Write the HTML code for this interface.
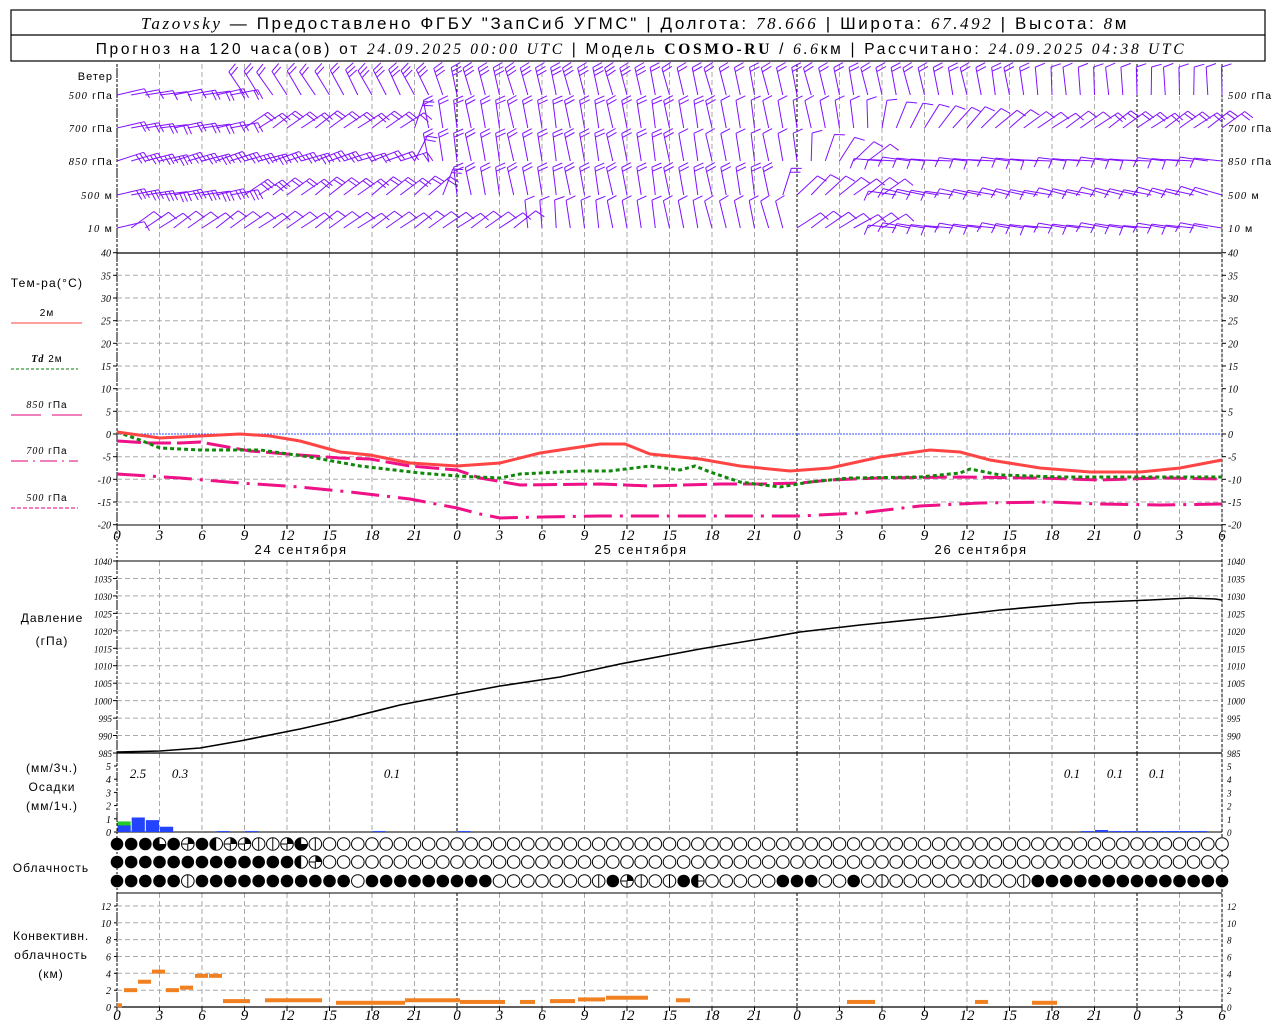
<!DOCTYPE html>
<html><head><meta charset="utf-8">
<style>
html,body{margin:0;padding:0;background:#fff;width:1280px;height:1024px;overflow:hidden}
svg{display:block;font-family:"Liberation Sans",sans-serif}
</style></head>
<body>
<svg id="s" width="1280" height="1024" viewBox="0 0 1280 1024" xmlns="http://www.w3.org/2000/svg">
<rect x="11" y="10" width="1254" height="51" fill="#fff" stroke="#000" stroke-width="1.2"/>
<line x1="11" y1="35" x2="1265" y2="35" stroke="#000" stroke-width="1.2"/>
<text x="635" y="29" text-anchor="middle" font-size="17" letter-spacing="2.6"><tspan font-family="Liberation Serif" font-style="italic">Tazovsky</tspan> — Предоставлено ФГБУ "ЗапСиб УГМС" | Долгота: <tspan font-family="Liberation Serif" font-style="italic">78.666</tspan> | Широта: <tspan font-family="Liberation Serif" font-style="italic">67.492</tspan> | Высота: <tspan font-family="Liberation Serif" font-style="italic">8</tspan>м</text>
<text x="641" y="54" text-anchor="middle" font-size="15.5" letter-spacing="2.7">Прогноз на 120 часа(ов) от <tspan font-family="Liberation Serif" font-style="italic">24.09.2025 00:00 UTC</tspan>  | Модель <tspan font-family="Liberation Serif" font-weight="bold">COSMO-RU</tspan> / <tspan font-family="Liberation Serif" font-style="italic">6.6</tspan>км | Рассчитано: <tspan font-family="Liberation Serif" font-style="italic">24.09.2025 04:38 UTC</tspan></text>
<g id="g"></g>
</svg>
<script>
var g=document.getElementById('g'),out='';
var X0=117,X1=1222,PH=340/24;
function X(h){return X0+h*PH}
function L(x1,y1,x2,y2,c,w,d){out+='<line x1="'+x1.toFixed(1)+'" y1="'+y1.toFixed(1)+'" x2="'+x2.toFixed(1)+'" y2="'+y2.toFixed(1)+'" stroke="'+c+'" stroke-width="'+(w||1)+'"'+(d?' stroke-dasharray="'+d+'"':'')+'/>';}
function T(x,y,s,fs,anc,it,ls){out+='<text x="'+x+'" y="'+y+'" font-size="'+fs+'"'+(anc?' text-anchor="'+anc+'"':'')+(it?' font-style="italic" font-family="Liberation Serif"':'')+(ls?' letter-spacing="'+ls+'"':'')+'>'+s+'</text>';}
function P(pts,c,w,d){var s='';for(var i=0;i<pts.length;i+=2)s+=(i?'L':'M')+pts[i]+' '+pts[i+1];out+='<path d="'+s+'" fill="none" stroke="'+c+'" stroke-width="'+w+'"'+(d?' stroke-dasharray="'+d+'"':'')+'/>';}
function vgrid(y1,y2){for(var h=0;h<=78;h+=3){var x=X(h);if(h%24==0){L(x,y1,x,y2,'#000',1,'3,2');}else L(x,y1,x,y2,'#aaa',1,'5,3');}}
function hgrid(y,){L(X0,y,X1,y,'#aaa',1,'5,3');}
vgrid(64,253);vgrid(253,525);vgrid(561,753);vgrid(753,832);vgrid(893,1007);
L(X1,64,X1,1007,'#000',1,'3,2');
for(var t=-20;t<=40;t+=5){var y=434-t*4.533;if(t>-20&&t<40&&t!=0)hgrid(y);L(X0-4,y,X0,y,'#000');L(X1,y,X1+4,y,'#000');T(X0-6,y+4,t,10,'end',1);T(X1+6,y+4,t,10,null,1);}
L(X0,434,X1,434,'#3050ff',1,'2,1');
L(X0,253,X1,253,'#000',1.2);L(X0,525,X1,525,'#000',1);
for(var p=985;p<=1040;p+=5){var y=561+(1040-p)*3.4909;if(p>985&&p<1040)hgrid(y);L(X0-4,y,X0,y,'#000');T(X0-5,y+4,p,9,'end',1);T(X1+5,y+4,p,9,null,1);}
L(X0,561,X1,561,'#000',1);L(X0,753,X1,753,'#000',1.2);
for(var m=0;m<=5;m++){var y=832-m*13.2;T(X0-6,y+4,m,10,'end',1);T(X1+5,y+4,m,9,null,1);L(X0-3,y,X0,y,'#000');}
L(X0,832,X1,832,'#000',1);L(X0,893,X1,893,'#000',1);
for(var k=0;k<=12;k+=2){var y=1007-k*8.42;if(k>0)hgrid(y);T(X0-6,y+4,k,10,'end',1);T(X1+5,y+4,k,9,null,1);L(X0-3,y,X0,y,'#000');}
L(X0,1007,X1,1007,'#000',1.2);
L(X0,64,X0,1007,'#000',1,'2,2');
var hl=[0,3,6,9,12,15,18,21];
for(var h=0;h<=78;h+=3){var x=X(h);T(x,540,hl[(h/3)%8],15,'middle',1);T(x,1020,hl[(h/3)%8],15,'middle',1);L(x,1007,x,1011,'#000');L(x,525,x,529,'#000');}
T(X(13),554,'24 сентября',13,'middle',0,1.8);T(X(37),554,'25 сентября',13,'middle',0,1.8);T(X(61),554,'26 сентября',13,'middle',0,1.8);
T(113,80,'Ветер',11,'end',0,1);
var lv=[['500','гПа',95],['700','гПа',128],['850','гПа',161],['500','м',195],['10','м',228]];
lv.forEach(function(a){out+='<text x="113" y="'+(a[2]+4)+'" font-size="10.5" text-anchor="end" letter-spacing="1.2"><tspan font-style="italic" font-family="Liberation Serif">'+a[0]+'</tspan>  '+a[1]+'</text>';out+='<text x="1228" y="'+(a[2]+4)+'" font-size="10.5" letter-spacing="1.2"><tspan font-style="italic" font-family="Liberation Serif">'+a[0]+'</tspan>  '+a[1]+'</text>';});
T(47,287,'Тем-ра(°C)',12,'middle',0,1.2);
T(47,316,'2м',10,'middle',0,1);L(11,323,82,323,'#ff4040',1);
out+='<text x="47" y="362" font-size="10" text-anchor="middle" letter-spacing="1"><tspan font-style="italic" font-weight="bold" font-family="Liberation Serif">Td</tspan>  2м</text>';L(11,369,78,369,'#008000',1,'3,2');
out+='<text x="47" y="408" font-size="10" text-anchor="middle" letter-spacing="1"><tspan font-style="italic" font-family="Liberation Serif">850</tspan>  гПа</text>';L(11,415,41,415,'#e0007a',1);L(52,415,82,415,'#e0007a',1);
out+='<text x="47" y="454" font-size="10" text-anchor="middle" letter-spacing="1"><tspan font-style="italic" font-family="Liberation Serif">700</tspan>  гПа</text>';L(11,461,78,461,'#e0007a',1,'17,5,2,5');
out+='<text x="47" y="501" font-size="10" text-anchor="middle" letter-spacing="1"><tspan font-style="italic" font-family="Liberation Serif">500</tspan>  гПа</text>';L(11,508,78,508,'#e0007a',1,'4,2');
T(52,622,'Давление',12,'middle',0,1);T(52,645,'(гПа)',12,'middle',0,1);
T(52,772,'(мм/3ч.)',12,'middle',0,1);T(52,791,'Осадки',12,'middle',0,1);T(52,810,'(мм/1ч.)',12,'middle',0,1);
T(51,872,'Облачность',12,'middle',0,1);
T(51,940,'Конвективн.',12,'middle',0,0.8);T(51,959,'облачность',12,'middle',0,1);T(51,978,'(км)',12,'middle',0,1);
var red=[117,432,160,438,240,434,270,436,300,441,340,452,370,455,410,463,457,466,500,463,540,453,600,444,625,444,650,454,700,459,740,466,790,471,830,468,880,457,930,450,960,452,990,460,1040,468,1090,472,1140,472,1180,468,1222,460];
var grn=[117,432,140,440,160,448,200,450,260,450,310,457,360,466,420,473,457,476,500,478,520,474,580,471,610,471,650,466,680,470,695,466,710,472,740,482,780,487,810,482,850,478,920,477,960,473,970,469,1000,475,1060,477,1140,477,1222,477];
var m85=[117,441,150,443,180,443,200,442,250,451,300,455,340,458,370,459,410,466,457,470,480,478,520,485,600,484,650,486,720,484,760,484,800,483,830,480,880,478,960,477,1040,478,1100,480,1160,478,1222,479];
var m70=[117,474,180,478,240,483,300,487,350,492,410,499,457,508,480,514,500,518,540,517,600,516,700,516,800,516,860,513,920,506,980,503,1050,502,1100,504,1160,505,1222,504];
P(m85,'#ee1187',3,'24,6');
P(m70,'#ee1187',3,'28,8,3,8');
P(grn,'#10880a',3,'4,3');
P(red,'#ff4444',3);
var pr=[117,752,160,751,200,748,240,741,300,729,340,720,400,705,457,694,500,686,560,677,620,664,700,649,760,639,800,632,860,625,940,617,1000,610,1080,603,1150,600,1190,598,1215,599,1222,600];
P(pr,'#000',1.6);
function bar(h,v,c){var x=X(h)+0.5,w=PH-1,hh=v*13.2;out+='<rect x="'+x+'" y="'+(832-hh)+'" width="'+w+'" height="'+hh+'" fill="'+c+'"/>';}
bar(0,0.8,'#22cc22');bar(0,0.5,'#2244ff');bar(1,1.1,'#2244ff');bar(2,0.9,'#2244ff');bar(3,0.4,'#2244ff');
[7,9,18,24,68,69,70,71,72,73,74,75,76].forEach(function(h){bar(h,h==69?0.15:0.07,'#2244ff');});
T(138,778,'2.5',13,'middle',1);T(180,778,'0.3',13,'middle',1);T(392,778,'0.1',13,'middle',1);T(1072,778,'0.1',13,'middle',1);T(1115,778,'0.1',13,'middle',1);T(1157,778,'0.1',13,'middle',1);
function cb(x1,x2,v){out+='<rect x="'+x1+'" y="'+(1007-v*8.42-2)+'" width="'+(x2-x1)+'" height="4" fill="#f08020"/>';}
cb(117,122,0.2);cb(124,137,2);cb(138,151,3);cb(152,165,4.2);cb(166,179,2);cb(180,193,2.3);cb(195,208,3.7);cb(209,222,3.7);cb(223,250,0.7);cb(265,322,0.8);cb(336,405,0.5);cb(405,460,0.8);cb(460,505,0.6);cb(520,535,0.6);cb(550,575,0.7);cb(578,605,0.9);cb(606,648,1.1);cb(676,690,0.8);cb(847,875,0.6);cb(975,988,0.6);cb(1032,1057,0.5);
function circ(cx,cy,t){var r=6.3;
 if(t=='F'){out+='<circle cx="'+cx+'" cy="'+cy+'" r="'+r+'" fill="#000"/>';return;}
 out+='<circle cx="'+cx+'" cy="'+cy+'" r="'+r+'" fill="#fff" stroke="#000" stroke-width="1"/>';
 if(t=='V'){L(cx,cy-r,cx,cy+r,'#000');}
 if(t=='H'){out+='<path d="M'+cx+' '+(cy-r)+'A'+r+' '+r+' 0 0 0 '+cx+' '+(cy+r)+'Z" fill="#000"/>';}
 if(t=='Q'){out+='<path d="M'+cx+' '+cy+'L'+cx+' '+(cy-r)+'A'+r+' '+r+' 0 0 1 '+(cx+r)+' '+cy+'Z" fill="#000"/>';L(cx,cy,cx,cy+r,'#000');L(cx-r,cy,cx,cy,'#000');}
 if(t=='T'){out+='<path d="M'+cx+' '+cy+'L'+cx+' '+(cy-r)+'A'+r+' '+r+' 0 1 0 '+(cx+r)+' '+cy+'Z" fill="#000"/>';}
 if(t=='X'){out+='<path d="M'+cx+' '+(cy-r)+'A'+r+' '+r+' 0 0 0 '+cx+' '+(cy+r)+'Z" fill="#000"/>';L(cx,cy,cx+r,cy,'#000');L(cx,cy-r,cx,cy+r,'#000');}
}
function fill(s,n){while(s.length<n)s+='E';return s;}
var r1=fill('FFFTFQFHQQVVQTV',79);
var r2=fill('FFFFFFFFFFFFFHQ',79);
var r3=fill('FFFFFVFFFFFFFFFFFEFFFFFFFFFEEEEEEEVFQVEVFXEEEEEFFFEEFEVEEEEEEVEEVFFFFFFFFFFFFFF',79);
for(var h=0;h<79;h++){var x=X(h);circ(x,844,r1[h]);circ(x,862,r2[h]);circ(x,881,r3[h]);}
function barb(x,y,a,n,mir){var len=28;var ar,dx,dy,fx,fy;
 if(mir&&a>62){ar=-a*Math.PI/180;dx=Math.sin(ar);dy=-Math.cos(ar);fx=dy;fy=-dx;}
 else{ar=a*Math.PI/180;dx=Math.sin(ar);dy=-Math.cos(ar);fx=-dy;fy=dx;}
 var tx=x+dx*len,ty=y+dy*len;var s='M'+x.toFixed(1)+' '+y.toFixed(1)+'L'+tx.toFixed(1)+' '+ty.toFixed(1);
 for(var i=0;i<n;i++){var px=tx-dx*4*i,py=ty-dy*4*i;var fl=10;s+='M'+px.toFixed(1)+' '+py.toFixed(1)+'L'+(px+fx*fl+dx*3).toFixed(1)+' '+(py+fy*fl+dy*3).toFixed(1);}
 out+='<path d="'+s+'" fill="none" stroke="#8010ff" stroke-width="1"/>';}
function interp(k,h){for(var i=0;i<k.length-2;i+=2){if(h<=k[i+2]){var f=(h-k[i])/(k[i+2]-k[i]);return k[i+1]+(k[i+3]-k[i+1])*f;}}return k[k.length-1];}
var prof=[
 [95,[0,80,8,80,9,-35,22,-25,24,-15,60,-12,66,-5,78,0],[0,1,9,2,24,3,50,2,78,1]],
 [128,[0,80,8,80,9,55,20,55,22,-10,52,-10,56,30,64,55,78,55],[0,2,20,2,24,2,60,1,78,2]],
 [161,[0,75,20,70,22,-10,48,-10,50,20,53,55,54,85,78,85],[0,3,30,2,48,1,54,1,78,1]],
 [195,[0,80,8,80,9,55,22,50,24,-10,46,-10,48,45,54,55,55,80,78,75],[0,3,20,2,40,2,54,1,78,1]],
 [228,[0,80,1,55,28,55,29,-5,47,-15,48,55,54,60,55,82,78,82],[0,1,30,1,78,1]]
];
prof.forEach(function(p){for(var h=0;h<79;h++){var a=interp(p[1],h)+((h*37)%7-3);var n=Math.round(interp(p[2],h));barb(X(h),p[0],a,n,h>40);}});
g.innerHTML=out;
</script>
</body></html>
